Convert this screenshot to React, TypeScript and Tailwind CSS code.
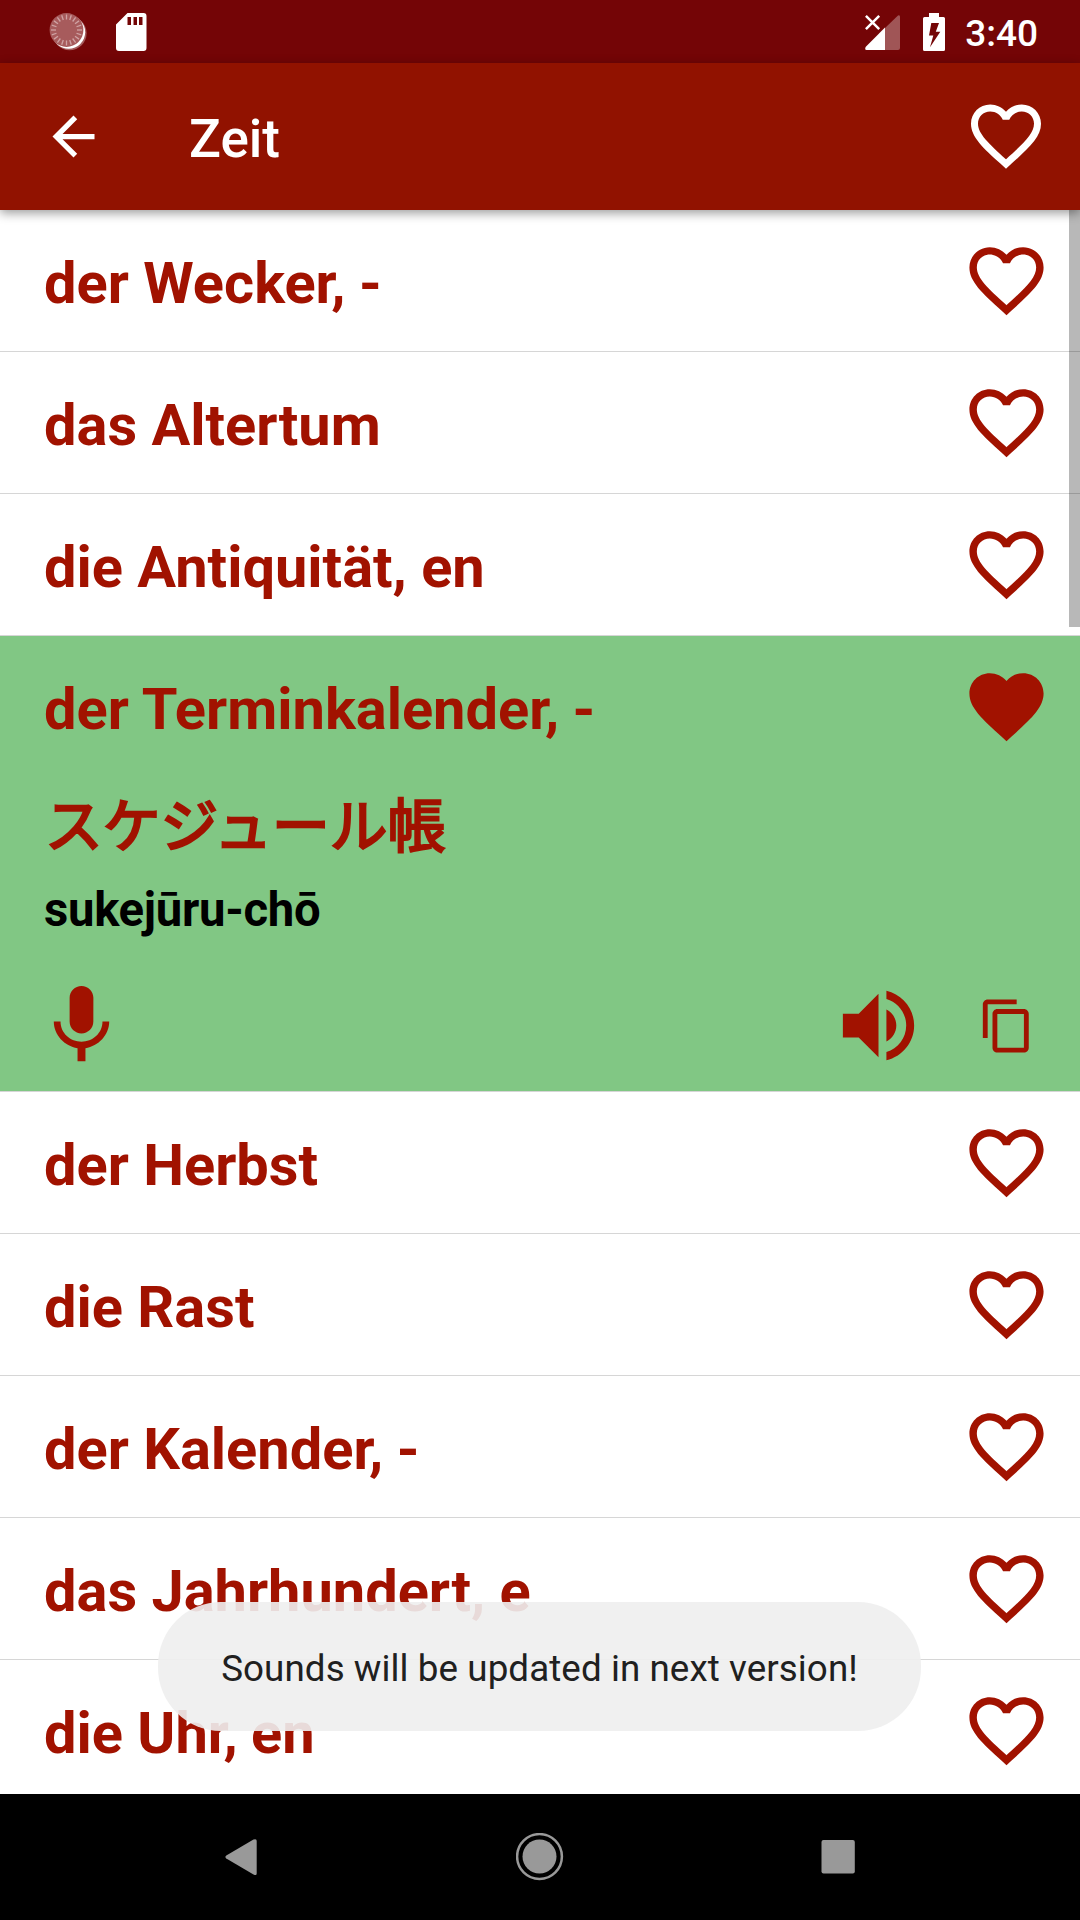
import { useState } from 'react';

type Word = {
  text: string;
  translation?: string;
  reading?: string;
};

const WORDS: Word[] = [
  { text: 'der Wecker, -' },
  { text: 'das Altertum' },
  { text: 'die Antiquität, en' },
  { text: 'der Terminkalender, -', translation: 'スケジュール帳', reading: 'sukejūru-chō' },
  { text: 'der Herbst' },
  { text: 'die Rast' },
  { text: 'der Kalender, -' },
  { text: 'das Jahrhundert, e' },
  { text: 'die Uhr, en' },
];

const ICONS = {
  back: 'M20 11H7.83l5.59-5.59L12 4l-8 8 8 8 1.41-1.41L7.83 13H20v-2z',
  heart:
    'M12 21.35l-1.45-1.32C5.4 15.36 2 12.28 2 8.5 2 5.42 4.42 3 7.5 3c1.74 0 3.41.81 4.5 2.09C13.09 3.81 14.76 3 16.5 3 19.58 3 22 5.42 22 8.5c0 3.78-3.4 6.86-8.55 11.54L12 21.35z',
  heartOutline:
    'M12.1 18.55l-.1.1-.11-.1C7.14 14.24 4 11.39 4 8.5 4 6.5 5.5 5 7.5 5c1.54 0 3.04 1 3.57 2.36h1.86C13.46 6 14.96 5 16.5 5c2 0 3.5 1.5 3.5 3.5 0 2.89-3.14 5.74-7.9 10.05M16.5 3c-1.74 0-3.41.81-4.5 2.08C10.91 3.81 9.24 3 7.5 3 4.42 3 2 5.41 2 8.5c0 3.77 3.4 6.86 8.55 11.53L12 21.35l1.45-1.32C18.6 15.36 22 12.27 22 8.5 22 5.41 19.58 3 16.5 3z',
  mic: 'M12 14c1.66 0 2.99-1.34 2.99-3L15 5c0-1.66-1.34-3-3-3S9 3.34 9 5v6c0 1.66 1.34 3 3 3zm5.3-3c0 3-2.54 5.1-5.3 5.1S6.7 14 6.7 11H5c0 3.41 2.72 6.23 6 6.72V21h2v-3.28c3.28-.48 6-3.3 6-6.72h-1.7z',
  volume:
    'M3 9v6h4l5 5V4L7 9H3zm13.5 3c0-1.77-1.02-3.29-2.5-4.03v8.05c1.48-.73 2.5-2.25 2.5-4.02zM14 3.23v2.06c2.89.86 5 3.54 5 6.71s-2.11 5.85-5 6.71v2.06c4.01-.91 7-4.49 7-8.77s-2.99-7.86-7-8.77z',
  copy: 'M16 1H4c-1.1 0-2 .9-2 2v14h2V3h12V1zm3 4H8c-1.1 0-2 .9-2 2v14c0 1.1.9 2 2 2h11c1.1 0 2-.9 2-2V7c0-1.1-.9-2-2-2zm0 16H8V7h11v14z',
};

function Icon({ name, className }: { name: keyof typeof ICONS; className: string }) {
  return (
    <svg viewBox="0 0 24 24" fill="currentColor" className={className}>
      <path d={ICONS[name]} />
    </svg>
  );
}

function StatusBar() {
  const ticks = Array.from({ length: 20 }, (_, i) => i * 18);

  return (
    <div className="flex h-[63px] shrink-0 items-center bg-[#740506] pl-[48px] pr-[42px] text-white">
      <svg viewBox="0 0 40 40" className="h-10 w-10">
        <circle cx="21.6" cy="21.3" r="17" fill="#fff" fillOpacity="0.35" />
        <circle cx="20.6" cy="20.2" r="16.6" fill="#fff" />
        <circle cx="18.5" cy="18" r="16.9" fill="#a75b5c" />
        {ticks.map((deg) => (
          <path
            key={deg}
            d="M18.5 2.5v5"
            stroke="#cfa3a4"
            strokeWidth="1.3"
            transform={`rotate(${deg} 18.5 18)`}
          />
        ))}
      </svg>
      <svg viewBox="0 0 31 38" className="ml-[28px] h-[38px] w-[31px]">
        <path
          fillRule="evenodd"
          fill="#fff"
          d="M11.5 0H27.5a3 3 0 0 1 3 3v32a3 3 0 0 1-3 3h-24.5a3 3 0 0 1-3-3V11.5zM11.5 4v8h3.5V4zm6 0v8h3.500V4zm5.500 0v8h3.500V4z"
        />
      </svg>
      <svg viewBox="0 0 35 35" className="ml-auto mt-0.5 h-[35px] w-[35px]">
        <path d="M20 13L33 .5Q35-.5 35 2v31q0 2-2 2H20z" fill="#fff" fillOpacity="0.32" />
        <path d="M20 12.5V35H1.5Q-.5 35 .6 32z" fill="#fff" />
        <path d="M.9.9l13.3 13.3M14.2.9L.9 14.2" stroke="#fff" strokeWidth="2.5" />
      </svg>
      <svg viewBox="0 0 22 38" className="ml-[23px] h-[38px] w-[22px]">
        <path
          fillRule="evenodd"
          fill="#fff"
          d="M6 0h10v4h4.5A1.5 1.5 0 0 1 22 5.5v31a1.5 1.5 0 0 1-1.5 1.5h-19A1.5 1.5 0 0 1 0 36.5v-31A1.5 1.5 0 0 1 1.5 4H6zM8.3 10L6 22.5h4.300L7 34.3l10.3-15.6h-4.500L16 10z"
        />
      </svg>
      <span className="ml-[20px] mt-[4px] text-[37px] leading-none font-medium">3:40</span>
    </div>
  );
}

function AppBar({ title }: { title: string }) {
  return (
    <header className="relative z-10 flex h-[147px] shrink-0 items-center bg-[#911200] pl-[42px] pr-[32px] text-white shadow-[0_3px_10px_rgba(0,0,0,0.4)]">
      <Icon name="back" className="h-[63px] w-[63px]" />
      <h1 className="ml-[84px] mt-[5px] text-[53px] leading-none font-medium">{title}</h1>
      <Icon name="heartOutline" className="mb-px ml-auto h-[84px] w-[84px]" />
    </header>
  );
}

function WordRow({ word }: { word: Word }) {
  const [liked, setLiked] = useState(Boolean(word.translation));
  // pull the comma in after an "r"
  const [head, tail] = word.text.split('r,');

  return (
    <li className={word.translation ? 'border-b border-[#d6d6d6] bg-[#81c784]' : 'border-b border-[#d6d6d6] bg-white'}>
      <div className="flex h-[141px] items-center justify-between pl-[44px] pr-[29px]">
        <span className="pt-[6px] text-[57.75px] leading-none font-bold">
          {head}
          {tail !== undefined && (
            <>
              <span className="tracking-[-1px]">r,</span>
              {tail}
            </>
          )}
        </span>
        <button type="button" onClick={() => setLiked(!liked)}>
          <Icon name={liked ? 'heart' : 'heartOutline'} className="h-[89px] w-[89px]" />
        </button>
      </div>

      {word.translation && (
        <div className="flex h-[314px] flex-col">
          <p className="mt-[20px] pl-[45px] text-[57.75px] leading-[60px] font-normal [-webkit-text-stroke:2.4px_#a11200]">
            {word.translation}
          </p>
          <p className="mt-[25px] pl-[44px] text-[47.25px] leading-[56px] font-bold tracking-[-0.3px] text-black">
            {word.reading}
          </p>
          <div className="mt-auto mb-[18px] flex items-center pl-[34px] pr-[44px]">
            <Icon name="mic" className="h-[95px] w-[95px]" />
            <Icon name="volume" className="ml-auto h-[95px] w-[95px]" />
            <Icon name="copy" className="ml-[52px] h-[58px] w-[58px]" />
          </div>
        </div>
      )}
    </li>
  );
}

function NavBar() {
  return (
    <nav className="flex h-[126px] shrink-0 items-center justify-between bg-black px-[216px] text-[#999]">
      <svg viewBox="0 0 48 48" fill="currentColor" className="h-12 w-12">
        <path d="M10.3 22.5L37.5 6.6Q40.7 5.2 40.7 8v32.5Q40.7 43 37.5 41.4L10.3 25.5Q8.5 24 10.3 22.5z" />
      </svg>
      <svg viewBox="0 0 48 48" fill="currentColor" className="h-12 w-12">
        <circle cx="23.5" cy="23.5" r="22.4" fill="none" stroke="currentColor" strokeWidth="2.5" />
        <circle cx="23.5" cy="23.5" r="17" />
      </svg>
      <svg viewBox="0 0 48 48" fill="currentColor" className="h-12 w-12">
        <rect x="5.5" y="7" width="33.3" height="33.5" rx="2" />
      </svg>
    </nav>
  );
}

export default function App() {
  return (
    <div className="relative flex h-[1920px] w-[1080px] flex-col overflow-hidden bg-white font-[Roboto,'Noto_Sans_CJK_JP',sans-serif]">
      <StatusBar />
      <AppBar title="Zeit" />

      <main className="relative min-h-0 flex-1 overflow-hidden text-[#a11200]">
        <ul>
          {WORDS.map((word) => (
            <WordRow key={word.text} word={word} />
          ))}
        </ul>
        <div className="absolute top-0 right-0 h-[417px] w-[11px] bg-black/28" />
      </main>

      <NavBar />

      {/* toast */}
      <div className="absolute top-[1602px] left-[158px] flex h-[129px] w-[763px] items-center justify-center rounded-[63px] bg-[#eeeeee]/91">
        <span className="pt-[5px] text-[36.75px] leading-none tracking-[0.08px] whitespace-nowrap text-[#202020]">
          Sounds will be updated in next version!
        </span>
      </div>
    </div>
  );
}
